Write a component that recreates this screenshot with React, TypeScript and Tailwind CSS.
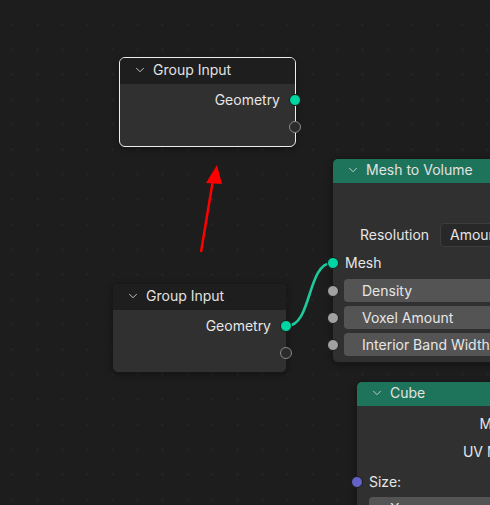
import { ChevronDown } from 'lucide-react';

type SocketKind = 'geo' | 'float' | 'vector' | 'empty';

function Socket({ kind, side }: { kind: SocketKind; side: 'left' | 'right' }) {
  const color =
    kind === 'geo'
      ? 'bg-[#00d6a3] border-[#1a1a1a]'
      : kind === 'float'
        ? 'bg-[#a1a1a1] border-[#1a1a1a]'
        : kind === 'vector'
          ? 'bg-[#6363c7] border-[#1a1a1a]'
          : 'bg-[#2b2b2b] border-[#8a8a8a] border-[1.5px]';
  return (
    <span
      className={`absolute top-1/2 h-[12px] w-[12px] -translate-y-1/2 rounded-full border ${color} ${
        side === 'right' ? 'right-[-6px]' : 'left-[-6px]'
      }`}
    />
  );
}

function Header({ title, green }: { title: string; green?: boolean }) {
  return (
    <div
      className={`flex items-center gap-[6px] rounded-t-[5px] pb-[2px] pl-[13px] text-[14px] text-[#e2e2e2] ${
        green ? 'h-[24px] bg-[#1e735b]' : 'h-[26px] bg-[#1e1e1e]'
      }`}
    >
      <ChevronDown size={14} strokeWidth={1.5} className="text-[#d8d8d8]" />
      <span className="leading-none">{title}</span>
    </div>
  );
}

function Field({ label, value }: { label: string; value?: string }) {
  return (
    <div className="relative ml-[11px] flex h-[23px] items-center justify-between rounded-[4px] bg-[#545454] pl-[18px] pr-[10px] text-[14px] leading-none text-[#e6e6e6]">
      <span>{label}</span>
      {value && <span>{value}</span>}
    </div>
  );
}

function GroupInput({ pos, selected }: { pos: string; selected?: boolean }) {
  return (
    <div
      className={`absolute ${pos} rounded-[6px] border bg-[#303030] shadow-[0_2px_6px_rgba(0,0,0,0.35)] ${
        selected ? 'border-[#ededed]' : 'border-[#181818]'
      }`}
    >
      <Header title="Group Input" />
      <div className="flex flex-col gap-[3px] pb-[7px] pt-[4px]">
        <div className="relative flex h-[24px] items-center justify-end pr-[15px] text-[14px] leading-none text-[#e6e6e6]">
          Geometry
          <Socket kind="geo" side="right" />
        </div>
        <div className="relative h-[24px]">
          <Socket kind="empty" side="right" />
        </div>
      </div>
    </div>
  );
}

export default function App() {
  return (
    <div className="relative h-[505px] w-[490px] overflow-hidden bg-[#1d1d1d] bg-[radial-gradient(circle,#242424_1px,transparent_1.5px)] bg-[length:25px_25px] bg-[position:0px_12px] font-['Inter','Noto_Sans',sans-serif]">
      {/* link between Group Input and Mesh to Volume */}
      <svg className="absolute inset-0" width="490" height="505">
        <path d="M287 326 C312 326 307 263 332 263" fill="none" stroke="#1ec99e" strokeWidth="2.6" />
      </svg>

      <GroupInput pos="left-[119px] top-[57px] w-[177px]" selected />
      <GroupInput pos="left-[112px] top-[283px] w-[175px]" />

      {/* Mesh to Volume */}
      <div className="absolute left-[332px] top-[158px] w-[200px] rounded-[6px] border border-[#181818] bg-[#303030] shadow-[0_2px_6px_rgba(0,0,0,0.35)]">
        <Header title="Mesh to Volume" green />
        <div className="flex flex-col pb-[6px] pt-[40px]">
          <div className="flex h-[24px] items-center text-[14px] leading-none text-[#e6e6e6]">
            <span className="ml-[27px] w-[80px]">Resolution</span>
            <div className="flex h-[24px] flex-1 items-center rounded-[4px] border border-[#3c3c3c] bg-[#282828] pl-[9px]">
              Amount
            </div>
          </div>
          <div className="relative mt-[4px] flex h-[24px] items-center pl-[12px] text-[14px] leading-none text-[#e6e6e6]">
            <Socket kind="geo" side="left" />
            Mesh
          </div>
          <div className="mt-[4px] flex flex-col gap-[4px]">
            <div className="relative">
              <Socket kind="float" side="left" />
              <Field label="Density" />
            </div>
            <div className="relative">
              <Socket kind="float" side="left" />
              <Field label="Voxel Amount" />
            </div>
            <div className="relative">
              <Socket kind="float" side="left" />
              <Field label="Interior Band Width" />
            </div>
          </div>
        </div>
      </div>

      {/* Cube */}
      <div className="absolute left-[356px] top-[381px] h-[140px] w-[176px] rounded-[6px] border border-[#181818] bg-[#303030] shadow-[0_2px_6px_rgba(0,0,0,0.35)]">
        <Header title="Cube" green />
        <div className="flex flex-col pt-[6px] text-[14px] leading-none text-[#e6e6e6]">
          <div className="flex h-[24px] items-center justify-end pr-[15px]">Mesh</div>
          <div className="mt-[4px] flex h-[24px] items-center justify-end pr-[15px]">UV Map</div>
          <div className="relative mt-[6px] flex h-[24px] items-center pl-[12px]">
            <Socket kind="vector" side="left" />
            Size:
          </div>
          <div className="ml-[12px] mr-[8px] mt-[3px] flex h-[23px] items-center justify-between rounded-t-[4px] bg-[#545454] pl-[21px] pr-[10px]">
            <span>X</span>
            <span>1 m</span>
          </div>
        </div>
      </div>

      {/* red annotation arrow */}
      <svg className="pointer-events-none absolute inset-0" width="490" height="505">
        <line x1="201" y1="252" x2="213" y2="180" stroke="#ff0000" strokeWidth="2.5" />
        <polygon points="217,165 206,183 222,184" fill="#ff0000" />
      </svg>
    </div>
  );
}
